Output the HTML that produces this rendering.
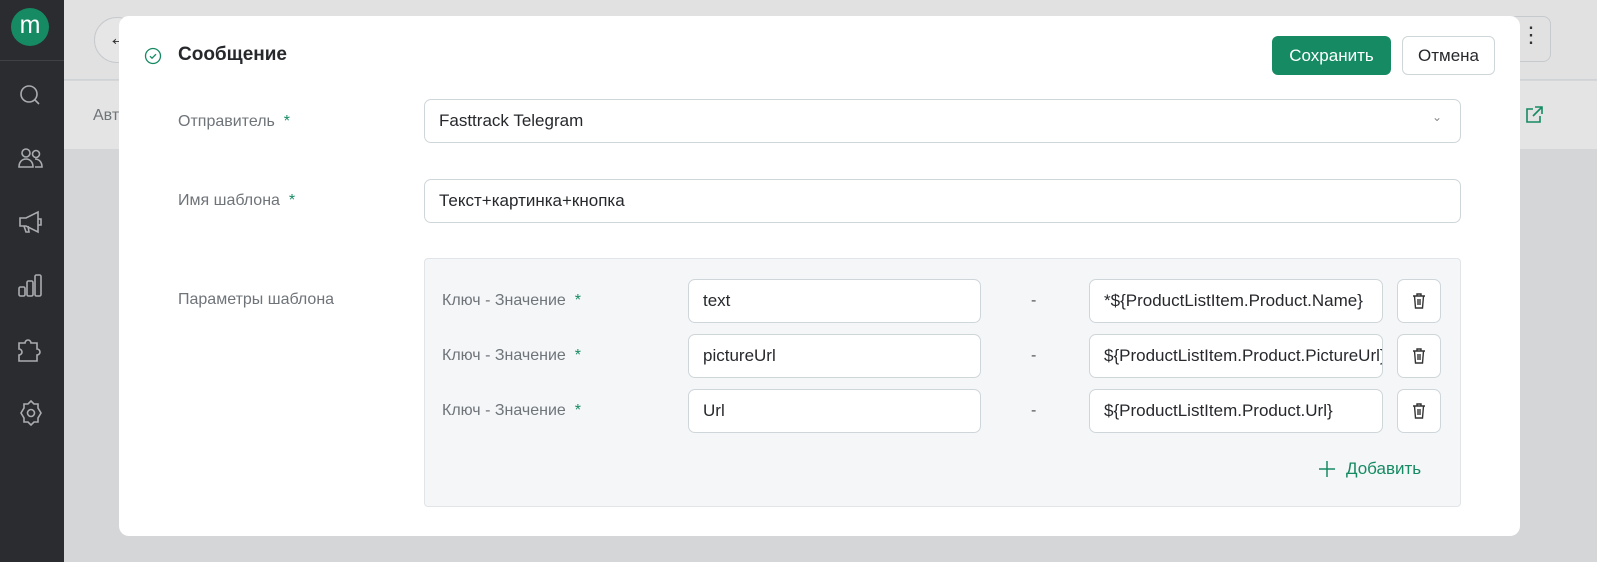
<!DOCTYPE html>
<html><head><meta charset="utf-8"><style>
*{box-sizing:border-box;margin:0;padding:0}
body{width:1597px;height:562px;overflow:hidden;position:relative;font-family:"Liberation Sans","Noto Sans CJK SC",sans-serif;background:#d4d6d7}
.sb{position:absolute;left:0;top:0;width:64px;height:562px;background:#2a2c30}
.logo{position:absolute;left:11px;top:8px;width:38px;height:38px;border-radius:50%;background:#168a62;color:#fff;font-size:25px;text-align:center;line-height:34px}
.sbl{position:absolute;left:0;top:60px;width:64px;height:1px;background:#3d4045}
.ic{position:absolute;left:17px}
.top{position:absolute;left:64px;top:0;right:0;height:80px;background:#e1e1e1;border-bottom:1px solid #d0d3d5}
.row2{position:absolute;left:64px;top:81px;right:0;height:68px;background:#e4e4e4}
.modal{position:absolute;left:119px;top:16px;width:1401px;height:520px;background:#fff;border-radius:10px}
.t{position:absolute;white-space:nowrap}
.lbl{color:#6f7479;font-size:16px}
.st{color:#168a62}
.inp{position:absolute;border:1px solid #cfd6d9;border-radius:7px;background:#fff;font-size:17px;color:#26282c;padding-left:14px;display:flex;align-items:center;overflow:hidden;white-space:nowrap}
.tr{position:absolute;width:44px;height:44px;border:1px solid #cfd6d9;border-radius:7px;background:#fff;display:flex;align-items:center;justify-content:center}
</style></head><body>
<div class="sb">
<div class="logo">m</div><div class="sbl"></div>
<svg class="ic" style="top:82px" width="26" height="26" viewBox="0 0 26 26" fill="none" stroke="#a9acb0" stroke-width="1.6"><circle cx="12" cy="12" r="8"/><path d="M18 18l4 4"/></svg>
<svg class="ic" style="top:145px" width="28" height="26" viewBox="0 0 28 26" fill="none" stroke="#a9acb0" stroke-width="1.6"><circle cx="9" cy="8" r="4"/><path d="M2 22c0-5 3-8 7-8s7 3 7 8z"/><circle cx="19" cy="9" r="3.5"/><path d="M18 14c4 0 7 3 7 8h-7"/></svg>
<svg class="ic" style="top:209px" width="28" height="26" viewBox="0 0 28 26" fill="none" stroke="#a9acb0" stroke-width="1.6"><path d="M3 9h6l12-6v20l-12-6H3z"/><path d="M7 17l2 6h3l-1-6"/><path d="M21 10h3v6h-3"/></svg>
<svg class="ic" style="top:273px" width="26" height="26" viewBox="0 0 26 26" fill="none" stroke="#a9acb0" stroke-width="1.6"><rect x="2" y="14" width="6" height="9" rx="1.5"/><rect x="10" y="8" width="6" height="15" rx="1.5"/><rect x="18" y="2" width="6" height="21" rx="1.5"/></svg>
<svg class="ic" style="top:335px" width="28" height="28" viewBox="0 0 28 28" fill="none" stroke="#a9acb0" stroke-width="1.6"><path d="M2 8h6a3 3 0 1 1 6 0h6v6a3 3 0 1 1 0 6v6H2v-6a3 3 0 1 0 0-6z"/></svg>
<svg class="ic" style="top:399px" width="28" height="28" viewBox="0 0 28 28" fill="none" stroke="#a9acb0" stroke-width="1.6"><path d="M14 2l3 3h4v4l3 5-3 5v4h-4l-3 3-3-3H7v-4l-3-5 3-5V5h4z"/><circle cx="14" cy="14" r="3.5"/></svg>
</div>
<div class="top">
<div style="position:absolute;left:30px;top:17px;width:46px;height:46px;border-radius:50%;border:1px solid #c6cacd;background:#e6e6e6"></div>
<div class="t" style="left:44px;top:25px;font-size:22px;color:#333">←</div>
<div style="position:absolute;left:1445px;top:16px;width:42px;height:46px;border:1px solid #c6cacd;border-radius:8px"></div>
<div class="t" style="left:1456px;top:22px;font-size:22px;color:#333">⋮</div>
</div>
<div class="row2"><div class="t" style="left:29px;top:26px;font-size:16px;color:#6f7479">Авт</div>
<svg style="position:absolute;left:1460px;top:24px" width="20" height="20" viewBox="0 0 20 20" fill="none" stroke="#168a62" stroke-width="1.6"><path d="M9 4H3v13h13v-6"/><path d="M11 2h7v7M18 2L9 11"/></svg></div>
<div class="modal">
<svg style="position:absolute;left:25px;top:31px" width="18" height="18" viewBox="0 0 18 18" fill="none" stroke="#168a62" stroke-width="1.3"><circle cx="9" cy="9" r="7.5"/><path d="M6 9.2l2 2 4-4"/></svg>
<div class="t" style="left:59px;top:28px;font-size:19px;font-weight:bold;color:#26282c">Сообщение</div>
<div style="position:absolute;left:1153px;top:20px;width:119px;height:39px;border-radius:6px;background:#168a62;color:#fff;font-size:17px;text-align:center;line-height:39px">Сохранить</div>
<div style="position:absolute;left:1283px;top:20px;width:93px;height:39px;border-radius:6px;border:1px solid #cfd6d9;color:#26282c;font-size:17px;text-align:center;line-height:37px">Отмена</div>
<div class="t lbl" style="left:59px;top:97px">Отправитель <span class="st">&nbsp;*</span></div>
<div class="inp" style="left:305px;top:83px;width:1037px;height:44px">Fasttrack Telegram<span style="position:absolute;right:18px;top:10px;color:#888;font-size:12px">⌄</span></div>
<div class="t lbl" style="left:59px;top:176px">Имя шаблона <span class="st">&nbsp;*</span></div>
<div class="inp" style="left:305px;top:163px;width:1037px;height:44px">Текст+картинка+кнопка</div>
<div class="t lbl" style="left:59px;top:275px">Параметры шаблона</div>
<div style="position:absolute;left:305px;top:242px;width:1037px;height:249px;background:#f4f6f8;border:1px solid #e1e5e8;border-radius:4px"></div>
<div class="t lbl" style="left:323px;top:276px">Ключ - Значение <span class="st">&nbsp;*</span></div>
<div class="inp" style="left:569px;top:263px;width:293px;height:44px">text</div>
<div class="t" style="left:912px;top:276px;color:#555;font-size:16px">-</div>
<div class="inp" style="left:970px;top:263px;width:294px;height:44px">*${ProductListItem.Product.Name}</div>
<div class="t lbl" style="left:323px;top:331px">Ключ - Значение <span class="st">&nbsp;*</span></div>
<div class="inp" style="left:569px;top:318px;width:293px;height:44px">pictureUrl</div>
<div class="t" style="left:912px;top:331px;color:#555;font-size:16px">-</div>
<div class="inp" style="left:970px;top:318px;width:294px;height:44px">${ProductListItem.Product.PictureUrl}</div>
<div class="t lbl" style="left:323px;top:386px">Ключ - Значение <span class="st">&nbsp;*</span></div>
<div class="inp" style="left:569px;top:373px;width:293px;height:44px">Url</div>
<div class="t" style="left:912px;top:386px;color:#555;font-size:16px">-</div>
<div class="inp" style="left:970px;top:373px;width:294px;height:44px">${ProductListItem.Product.Url}</div>
<div class="tr" style="left:1278px;top:263px"><svg width="16" height="18" viewBox="0 0 16 18" fill="none" stroke="#333" stroke-width="1.4"><path d="M2 4h12M6 4V2h4v2M3.5 4l1 12h7l1-12M7 7v6M9 7v6"/></svg></div>
<div class="tr" style="left:1278px;top:318px"><svg width="16" height="18" viewBox="0 0 16 18" fill="none" stroke="#333" stroke-width="1.4"><path d="M2 4h12M6 4V2h4v2M3.5 4l1 12h7l1-12M7 7v6M9 7v6"/></svg></div>
<div class="tr" style="left:1278px;top:373px"><svg width="16" height="18" viewBox="0 0 16 18" fill="none" stroke="#333" stroke-width="1.4"><path d="M2 4h12M6 4V2h4v2M3.5 4l1 12h7l1-12M7 7v6M9 7v6"/></svg></div>
<svg style="position:absolute;left:1199px;top:444px" width="18" height="18" viewBox="0 0 18 18" stroke="#168a62" stroke-width="1.5"><path d="M9 1v16M1 9h16"/></svg>
<div class="t" style="left:1227px;top:443px;font-size:17px;color:#168a62">Добавить</div>
</div>
</body></html>
